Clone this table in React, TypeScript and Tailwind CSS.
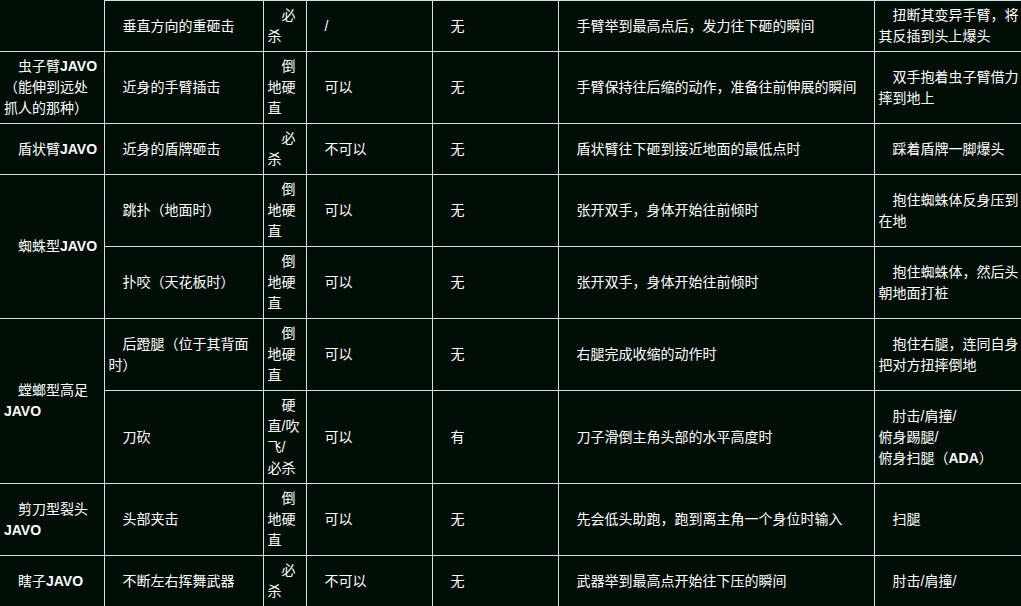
import React from "react"

type Cell = { text: string; rowSpan?: number; first?: boolean }

const rows: Cell[][] = [
  [
    { text: "", first: true },
    { text: "垂直方向的重砸击" },
    { text: "必杀" },
    { text: "/" },
    { text: "无" },
    { text: "手臂举到最高点后，发力往下砸的瞬间" },
    { text: "扭断其变异手臂，将其反插到头上爆头" },
  ],
  [
    { text: "虫子臂JAVO（能伸到远处抓人的那种）", first: true },
    { text: "近身的手臂插击" },
    { text: "倒地硬直" },
    { text: "可以" },
    { text: "无" },
    { text: "手臂保持往后缩的动作，准备往前伸展的瞬间" },
    { text: "双手抱着虫子臂借力摔到地上" },
  ],
  [
    { text: "盾状臂JAVO", first: true },
    { text: "近身的盾牌砸击" },
    { text: "必杀" },
    { text: "不可以" },
    { text: "无" },
    { text: "盾状臂往下砸到接近地面的最低点时" },
    { text: "踩着盾牌一脚爆头" },
  ],
  [
    { text: "蜘蛛型JAVO", rowSpan: 2, first: true },
    { text: "跳扑（地面时）" },
    { text: "倒地硬直" },
    { text: "可以" },
    { text: "无" },
    { text: "张开双手，身体开始往前倾时" },
    { text: "抱住蜘蛛体反身压到在地" },
  ],
  [
    { text: "扑咬（天花板时）" },
    { text: "倒地硬直" },
    { text: "可以" },
    { text: "无" },
    { text: "张开双手，身体开始往前倾时" },
    { text: "抱住蜘蛛体，然后头朝地面打桩" },
  ],
  [
    { text: "螳螂型高足JAVO", rowSpan: 2, first: true },
    { text: "后蹬腿（位于其背面时）" },
    { text: "倒地硬直" },
    { text: "可以" },
    { text: "无" },
    { text: "右腿完成收缩的动作时" },
    { text: "抱住右腿，连同自身把对方扭摔倒地" },
  ],
  [
    { text: "刀砍" },
    { text: "硬直/吹飞/\n必杀" },
    { text: "可以" },
    { text: "有" },
    { text: "刀子滑倒主角头部的水平高度时" },
    { text: "肘击/肩撞/\n俯身踢腿/\n俯身扫腿（ADA）" },
  ],
  [
    { text: "剪刀型裂头JAVO", first: true },
    { text: "头部夹击" },
    { text: "倒地硬直" },
    { text: "可以" },
    { text: "无" },
    { text: "先会低头助跑，跑到离主角一个身位时输入" },
    { text: "扫腿" },
  ],
  [
    { text: "瞎子JAVO", first: true },
    { text: "不断左右挥舞武器" },
    { text: "必杀" },
    { text: "不可以" },
    { text: "无" },
    { text: "武器举到最高点开始往下压的瞬间" },
    { text: "肘击/肩撞/" },
  ],
]

// JAVO / ADA are bold in the source page
function renderText(text: string) {
  return text.split("\n").map((line, i) => (
    <React.Fragment key={i}>
      {i > 0 && <br />}
      {line.split(/(JAVO|ADA)/).map((part, j) =>
        part === "JAVO" || part === "ADA" ? (
          <span key={j} className="font-bold">{part}</span>
        ) : (
          <React.Fragment key={j}>{part}</React.Fragment>
        )
      )}
    </React.Fragment>
  ))
}

export default function App() {
  return (
    <div className="w-[1021px] h-[606px] overflow-hidden bg-[#000e06] font-['Liberation_Sans','Noto_Sans_CJK_SC',sans-serif] text-white">
      <table className="table-fixed border-collapse w-[1029px]">
        <colgroup>
          <col className="w-[104px]" />
          <col className="w-[159px]" />
          <col className="w-[43px]" />
          <col className="w-[126px]" />
          <col className="w-[126px]" />
          <col className="w-[316px]" />
          <col className="w-[155px]" />
        </colgroup>
        <tbody>
          {rows.map((row, r) => (
            <tr key={r}>
              {row.map((c, k) => (
                <td
                  key={k}
                  rowSpan={c.rowSpan}
                  className={
                    "border border-[#d4e0e0] px-[4px] py-[4px] align-middle indent-[14px] text-[14px] leading-[21px]" +
                    (c.first ? " border-l-0" : "") +
                    (c.first && r === 0 ? " border-t-0" : "")
                  }
                >
                  {renderText(c.text)}
                </td>
              ))}
            </tr>
          ))}
        </tbody>
      </table>
    </div>
  )
}
